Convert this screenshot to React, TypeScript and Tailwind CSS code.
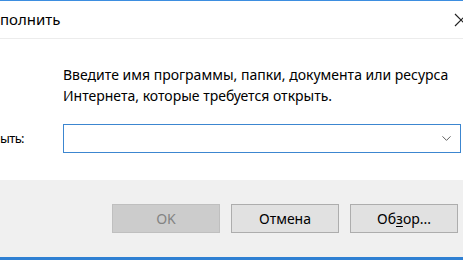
import { ChevronDown } from 'lucide-react';

export default function App() {
  return (
    <div className="w-[463px] h-[260px] overflow-hidden bg-white font-['Noto_Sans',sans-serif] text-black">
      <div className="flex flex-col h-full border-t border-b-[3px] border-[#3d8ee0] border-b-[#2f80d3]">
        {/* Title bar (window is cropped on the left) */}
        <div className="h-[38px] flex items-center justify-between border-b border-[#ececec] shrink-0">
          <span className="text-[15px] leading-none">полнить</span>
          <svg width="14" height="14" viewBox="0 0 14 14" className="-mr-[5px] text-[#222]">
            <path d="M1 1L13 13M13 1L1 13" stroke="currentColor" strokeWidth="1.2" />
          </svg>
        </div>

        {/* Body */}
        <div className="flex-1 bg-white flex flex-col">
          <p className="ml-[63px] mt-[25px] text-[14px] leading-[21px]">
            Введите имя программы, папки, документа или ресурса
            <br />
            Интернета, которые требуется открыть.
          </p>
          <div className="flex items-center mt-[18px]">
            <span className="w-[63px] shrink-0 text-[13px] tracking-[-0.6px]">ыть:</span>
            <div className="mr-[2px] flex-1 h-[29px] border border-[#3c86d0] bg-white flex items-center justify-end pr-[6px]">
              <ChevronDown size={15} strokeWidth={1.5} className="text-[#555]" />
            </div>
          </div>
        </div>

        {/* Footer */}
        <div className="h-[77px] bg-[#f0f0f0] flex items-start justify-end gap-[11px] pt-[24px] pr-[5px] shrink-0">
          <button className="w-[108px] h-[29px] border border-[#bfbfbf] bg-[#cccccc] text-[14px] text-[#838383]">
            OK
          </button>
          <button className="w-[108px] h-[29px] border border-[#adadad] bg-[#e1e1e1] text-[14px]">
            Отмена
          </button>
          <button className="w-[108px] h-[29px] border border-[#adadad] bg-[#e1e1e1] text-[14px]">
            Об<span className="underline underline-offset-2">з</span>ор...
          </button>
        </div>
      </div>
    </div>
  );
}
